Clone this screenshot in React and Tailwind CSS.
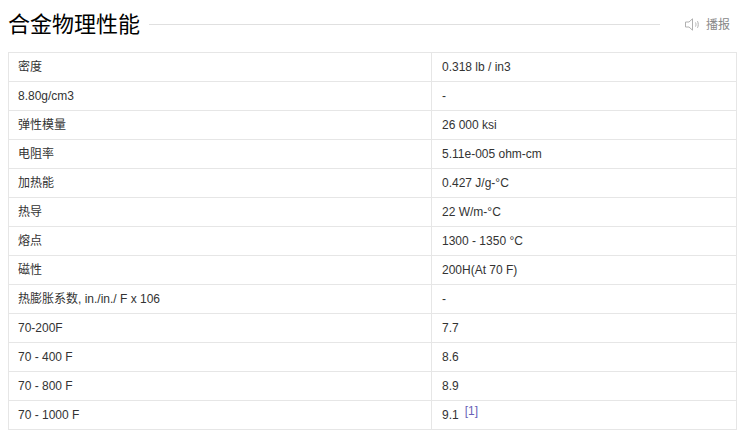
import React from "react";

const rows = [
  ["密度", "0.318 lb / in3"],
  ["8.80g/cm3", "-"],
  ["弹性模量", "26 000 ksi"],
  ["电阻率", "5.11e-005 ohm-cm"],
  ["加热能", "0.427 J/g-°C"],
  ["热导", "22 W/m-°C"],
  ["熔点", "1300 - 1350 °C"],
  ["磁性", "200H(At 70 F)"],
  ["热膨胀系数, in./in./ F x 106", "-"],
  ["70-200F", "7.7"],
  ["70 - 400 F", "8.6"],
  ["70 - 800 F", "8.9"],
  ["70 - 1000 F", "9.1"],
];

const SpeakerIcon = () => (
  <svg width="15" height="13" viewBox="0 0 15 13" fill="none" stroke="#b0b0b0" strokeWidth="1">
    <path d="M0.5 4h3.5L7.5 0.8v11.4L4 9H0.5z" />
    <path d="M10.5 4.5c.6 1.2.6 2.8 0 4" />
    <path d="M12.5 3.2c1 2 1 4.6 0 6.6" />
  </svg>
);

export default function App() {
  return (
    <div className="w-[745px] h-[434px] overflow-hidden bg-white font-['Liberation_Sans','Noto_Sans_CJK_SC',sans-serif] text-[#333]">
      <div className="flex items-center h-[52px] pl-2 pr-[15px] pb-[3px]">
        <h2 className="text-[22px] leading-[30px] text-[#000] font-normal whitespace-nowrap">合金物理性能</h2>
        <div className="flex-1 h-px bg-[#e0e0e0] ml-[9px] mr-[25px]"></div>
        <SpeakerIcon />
        <span className="ml-[6px] text-xs text-[#888]">播报</span>
      </div>
      <table className="ml-2 w-[729px] table-fixed border-collapse text-xs">
        <tbody>
          {rows.map(([name, value], i) => (
            <tr key={i} className="h-[29px]">
              <td className="w-[423px] border border-[#e6e6e6] px-[9px] py-0 align-middle">{name}</td>
              <td className="border border-[#e6e6e6] px-[10px] py-0 align-middle">
                {value}
                {i === rows.length - 1 && (
                  <sup className="ml-[6px] text-xs text-[#6a5fb8] align-baseline relative -top-[4px]">[1]</sup>
                )}
              </td>
            </tr>
          ))}
        </tbody>
      </table>
    </div>
  );
}
